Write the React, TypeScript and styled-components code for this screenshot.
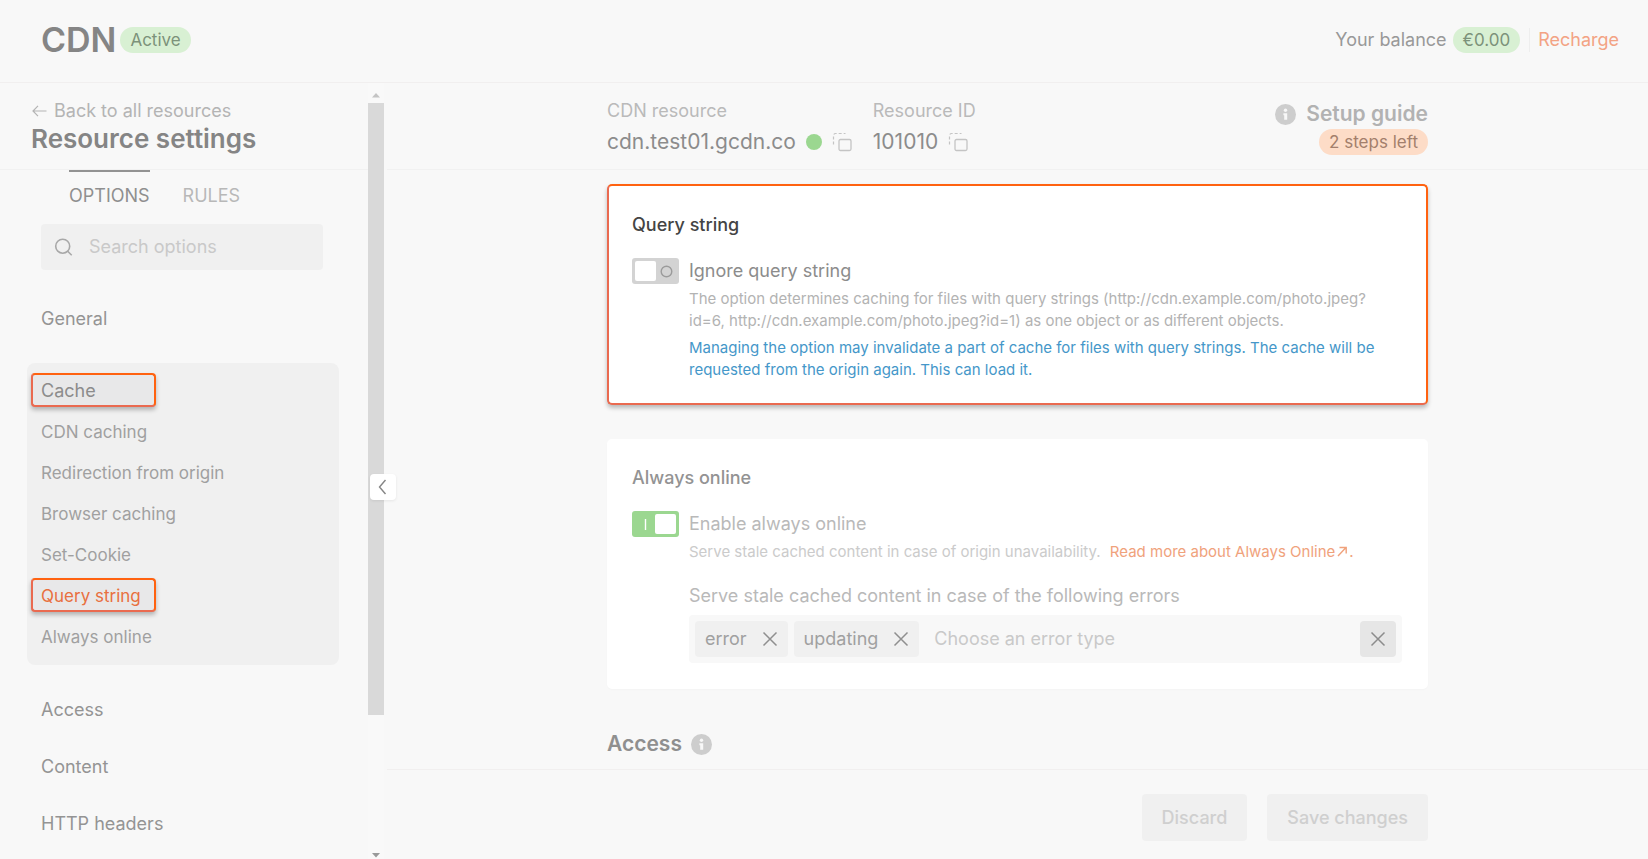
import React from "react";
import styled, { createGlobalStyle } from "styled-components";

const GlobalStyle = createGlobalStyle`
  *, *::before, *::after { box-sizing: border-box; }
  body { margin: 0; background: #f8f8f8; font-family: Inter, "Liberation Sans", sans-serif; }
  h1, h2, h3, p { margin: 0; padding: 0; }
  a { color: inherit; text-decoration: none; }
  button, input { font: inherit; color: inherit; border: 0; padding: 0; margin: 0; background: none; }
  button { cursor: pointer; }
`;

const Page = styled.div`
  display: flex;
  flex-direction: column;
  height: 100vh;
  overflow: hidden;
  color: #8a8a8a;
  font-size: 18px;
  line-height: 24px;
`;

const TopBar = styled.header`
  display: flex;
  align-items: center;
  justify-content: space-between;
  flex: none;
  height: 83px;
  padding: 0 29px 2px 41px;
  border-bottom: 1px solid #f1efef;
`;

const Brand = styled.div`
  display: flex;
  align-items: center;
  gap: 4px;
`;

const BrandName = styled.h1`
  font-size: 34px;
  line-height: 40px;
  font-weight: 600;
  color: #858585;
`;

const Pill = styled.span<{ $tone: "green" | "orange" }>`
  display: inline-block;
  padding: 0 10px;
  border-radius: 13px;
  font-size: 17px;
  line-height: 26px;
  white-space: nowrap;
  background: ${(p) => (p.$tone === "green" ? "#d8f0d3" : "#fddcc7")};
  color: ${(p) => (p.$tone === "green" ? "#7c927a" : "#a37f6c")};
`;

const Balance = styled.div`
  display: flex;
  align-items: center;
  gap: 6px;
  color: #999;
`;

const Recharge = styled.a`
  margin-left: 3px;
  padding-left: 8px;
  border-left: 1px solid #eee;
  color: #f3a384;
`;

const Body = styled.div`
  display: flex;
  flex: 1;
  min-height: 0;
`;

const Sidebar = styled.aside`
  position: relative;
  display: flex;
  flex: none;
  width: 387px;
`;

const SidebarContent = styled.div`
  flex: 1;
  overflow: hidden;
`;

const SidebarHead = styled.div`
  height: 87px;
  padding: 16px 31px 0;
  border-bottom: 1px solid #f1f1f1;
`;

const BackLink = styled.a`
  display: flex;
  align-items: center;
  gap: 7px;
  color: #b4b4b4;
`;

const SidebarTitle = styled.h2`
  font-size: 26px;
  line-height: 32px;
  font-weight: 600;
  color: #858585;
`;

const Tabs = styled.div`
  display: flex;
  gap: 33px;
  padding: 0 69px;
`;

const Tab = styled.button<{ $active?: boolean }>`
  height: 54px;
  padding-bottom: 5px;
  border-top: 2px solid ${(p) => (p.$active ? "#929292" : "transparent")};
  color: ${(p) => (p.$active ? "#8f8f8f" : "#b8b8b8")};
`;

const SearchBox = styled.label`
  display: flex;
  align-items: center;
  gap: 16px;
  height: 46px;
  margin: 0 45px 0 41px;
  padding: 0 13px;
  border-radius: 4px;
  background: #f0f0f0;
  color: #a8a8a8;
`;

const TextInput = styled.input`
  flex: 1;
  min-width: 0;
  outline: none;
  &::placeholder { color: #c9c9c9; opacity: 1; }
`;

const Nav = styled.nav`
  display: flex;
  flex-direction: column;
  padding: 36px 29px 0 27px;
`;

const NavSection = styled.a`
  padding: 0 14px;
  margin-bottom: 32px;
  line-height: 25px;
  color: #949494;
`;

const NavGroup = styled.div`
  display: flex;
  flex-direction: column;
  align-items: flex-start;
  gap: 7px;
  height: 302px;
  margin-bottom: 32px;
  padding: 10px 4px;
  border-radius: 8px;
  background: #f0f0f0;
`;

const NavItem = styled.a<{ $marked?: boolean; $tone?: "heading" | "current" }>`
  width: 125px;
  padding: 4px 8px 2px;
  border: 2px solid transparent;
  border-radius: 4px;
  font-size: ${(p) => (p.$tone === "heading" ? 18 : 17)}px;
  line-height: 24px;
  white-space: nowrap;
  color: ${(p) => (p.$tone === "current" ? "#e8703f" : p.$tone === "heading" ? "#8c8c8c" : "#a0a0a0")};
  ${(p) =>
    p.$marked &&
    `
    border-color: #ff6210 #ff6210 #ea6a50 #ea6a50;
    background: #e8e8e9;
    box-shadow: 0 3px 4px rgba(0, 0, 0, 0.25);
  `}
`;

const ScrollTrack = styled.div`
  display: flex;
  flex-direction: column;
  align-items: center;
  flex: none;
  width: 16px;
  margin-right: 3px;
  padding: 9px 0 1px;
  background: #f9f9f9;
`;

const ScrollThumb = styled.div`
  flex: 611;
  width: 100%;
  margin-top: 5px;
  background: #d9d9d9;
`;

const ScrollRest = styled.div`
  flex: 137;
`;

const CollapseButton = styled.button`
  position: absolute;
  top: 391px;
  right: -9px;
  display: flex;
  align-items: center;
  justify-content: center;
  width: 26px;
  height: 26px;
  border-radius: 4px;
  background: #fff;
  box-shadow: 0 1px 3px rgba(0, 0, 0, 0.08);
  color: #858585;
`;

const Main = styled.main`
  display: flex;
  flex-direction: column;
  flex: 1;
  min-width: 0;
`;

const Column = styled.div`
  width: 100%;
  max-width: 821px;
  margin: 0 auto;
`;

const ResourceBar = styled.div`
  flex: none;
  height: 87px;
  border-bottom: 1px solid #f1f1f1;
`;

const ResourceRow = styled(Column)`
  display: flex;
  padding-top: 16px;
`;

const Resource = styled.div`
  margin-right: 21px;
  color: #bababa;
`;

const ResourceValue = styled.div`
  display: flex;
  align-items: center;
  gap: 10px;
  margin-top: 3px;
  font-size: 21px;
  line-height: 32px;
  color: #8c8c8c;
`;

const StatusDot = styled.span`
  width: 16px;
  height: 16px;
  border-radius: 50%;
  background: #9bd790;
`;

const IconButton = styled.button`
  display: flex;
  align-items: center;
  justify-content: center;
  color: #c4c4c4;
`;

const Guide = styled.div`
  display: flex;
  flex-direction: column;
  align-items: flex-end;
  gap: 1px;
  margin: 1px 0 0 auto;
`;

const GuideLink = styled.a`
  display: flex;
  align-items: center;
  gap: 10px;
  font-size: 21px;
  line-height: 28px;
  font-weight: 600;
  color: #b2b2b2;
`;

const Scroller = styled.div`
  flex: 1;
  min-height: 0;
  overflow: hidden;
  padding-top: 14px;
`;

const Card = styled.section<{ $marked?: boolean }>`
  margin-bottom: 34px;
  padding: ${(p) => (p.$marked ? 24 : 22)}px 24px 22px 23px;
  border: 2px solid;
  border-color: ${(p) => (p.$marked ? "#ff6210 #ff6210 #ea6a50 #ea6a50" : "#fff")};
  border-radius: 5px;
  background: #fff;
  box-shadow: ${(p) => (p.$marked ? "0 3px 4px rgba(0, 0, 0, 0.25)" : "0 1px 2px rgba(0, 0, 0, 0.02)")};
`;

const CardTitle = styled.h3<{ $strong?: boolean }>`
  margin: 3px 0 21px;
  font-size: 18px;
  line-height: 24px;
  font-weight: 500;
  color: ${(p) => (p.$strong ? "#444" : "#939393")};
`;

const Option = styled.div`
  display: grid;
  grid-template-columns: 47px 1fr;
  column-gap: 10px;
`;

const Switch = styled.span<{ $on?: boolean }>`
  display: flex;
  flex-direction: ${(p) => (p.$on ? "row-reverse" : "row")};
  position: relative;
  width: 47px;
  height: 26px;
  padding: 3px;
  border-radius: 3px;
  background: ${(p) => (p.$on ? "#9bd790" : "#d3d3d3")};
`;

const SwitchInput = styled.input`
  position: absolute;
  inset: 0;
  width: 100%;
  height: 100%;
  opacity: 0;
  appearance: none;
`;

const SwitchKnob = styled.span`
  width: 21px;
  border-radius: 2px;
  background: #fff;
`;

const SwitchMark = styled.span`
  display: flex;
  flex: 1;
  align-items: center;
  justify-content: center;
`;

const OptionLabel = styled.label<{ $faded?: boolean }>`
  line-height: 26px;
  color: ${(p) => (p.$faded ? "#b9b9b9" : "#8c8c8c")};
`;

const OptionBody = styled.div`
  grid-column: 2;
`;

const Hint = styled.p<{ $tone?: "info" | "faded" }>`
  margin-top: ${(p) => (p.$tone === "info" ? 5 : 4)}px;
  padding-right: 12px;
  font-size: 15px;
  line-height: 22px;
  color: ${(p) => (p.$tone === "info" ? "#4597c9" : p.$tone === "faded" ? "#cbcbcb" : "#b3b3b3")};
`;

const HintLink = styled.a`
  margin-left: 5px;
  color: #f0a27c;
  svg { vertical-align: -2px; }
`;

const FieldLabel = styled.label`
  display: block;
  margin: 21px 0 7px;
  color: #b9b9b9;
`;

const TagField = styled.div`
  display: flex;
  align-items: center;
  gap: 6px;
  height: 48px;
  margin-bottom: 2px;
  padding: 0 6px;
  border-radius: 4px;
  background: #f8f8f8;
`;

const Tag = styled.span`
  display: flex;
  align-items: center;
  gap: 15px;
  height: 36px;
  padding: 0 10px;
  border-radius: 4px;
  background: #f0f0f0;
  color: #a0a0a0;
`;

const TagInput = styled(TextInput)`
  padding-left: 9px;
`;

const ClearButton = styled(IconButton)`
  width: 36px;
  height: 36px;
  border-radius: 4px;
  background: #e6e6e6;
  color: #8c8c8c;
`;

const TagRemove = styled(IconButton)`
  color: #8f8f8f;
`;

const SectionTitle = styled.h2`
  display: flex;
  align-items: center;
  gap: 9px;
  padding-top: 7px;
  font-size: 21px;
  line-height: 28px;
  font-weight: 600;
  color: #8f8f8f;
`;

const Footer = styled.footer`
  flex: none;
  height: 90px;
  padding-top: 24px;
  border-top: 1px solid #f1efef;
`;

const Actions = styled(Column)`
  display: flex;
  justify-content: flex-end;
  gap: 20px;
`;

const ActionButton = styled.button`
  height: 47px;
  padding: 0 20px;
  border-radius: 4px;
  background: #f0f0f0;
  font-weight: 500;
  color: #cfcfcf;
`;

const InfoIcon = () => (
  <svg width="21" height="21" viewBox="0 0 21 21" aria-hidden="true">
    <circle cx="10.500" cy="10.500" r="10.500" fill="#cdcdcd" />
    <circle cx="10.500" cy="6.300" r="1.700" fill="#f8f8f8" />
    <path d="M8.400 9.200h3.800v6.600H9.200v-4.500h-.8z" fill="#f8f8f8" />
  </svg>
);

const CopyIcon = () => (
  <svg width="20" height="20" viewBox="0 0 20 20" fill="none" stroke="currentColor" aria-hidden="true">
    <rect x="7" y="7.500" width="12" height="11" rx="1.500" strokeWidth="1.300" />
    <path d="M1.500 12.500V3.500a2 2 0 0 1 2-2H13.500" strokeWidth="1.200" strokeDasharray="3 2" />
  </svg>
);

const CloseIcon = () => (
  <svg width="16" height="16" viewBox="0 0 16 16" fill="none" stroke="currentColor" strokeWidth="1.500" aria-hidden="true">
    <path d="M1.500 1.500l13 13M14.500 1.500l-13 13" />
  </svg>
);

const BackIcon = () => (
  <svg width="16" height="12" viewBox="0 0 16 12" fill="none" stroke="currentColor" strokeWidth="1.200" aria-hidden="true">
    <path d="M15.500 6H2M7 .8L2 6l5 5.200" />
  </svg>
);

const SearchIcon = () => (
  <svg width="19" height="19" viewBox="0 0 19 19" fill="none" stroke="currentColor" strokeWidth="1.600" aria-hidden="true">
    <circle cx="8.700" cy="8.200" r="7" />
    <path d="M13.700 13.200l4 4" />
  </svg>
);

const ChevronIcon = () => (
  <svg width="10" height="16" viewBox="0 0 10 16" fill="none" stroke="currentColor" strokeWidth="1.400" aria-hidden="true">
    <path d="M7.500 1L1.500 8l6 7" />
  </svg>
);

const OutIcon = () => (
  <svg width="14" height="14" viewBox="0 0 14 14" fill="none" stroke="currentColor" strokeWidth="1.400" aria-hidden="true">
    <path d="M3 11L11 2.600M4.500 2.500h6.700v6" />
  </svg>
);

const ScrollArrow = ({ down }: { down?: boolean }) => (
  <svg width="8" height="6" viewBox="0 0 8 6" aria-hidden="true">
    <path d={down ? "M0 1h8L4 5.500z" : "M0 5.500h8L4 1z"} fill={down ? "#999" : "#c4c4c4"} />
  </svg>
);

const cacheItems = ["CDN caching", "Redirection from origin", "Browser caching", "Set-Cookie", "Query string", "Always online"];

export default function App() {
  return (
    <Page>
      <GlobalStyle />
      <TopBar>
        <Brand>
          <BrandName>CDN</BrandName>
          <Pill $tone="green">Active</Pill>
        </Brand>
        <Balance>
          Your balance
          <Pill $tone="green">€0.00</Pill>
          <Recharge href="#recharge">Recharge</Recharge>
        </Balance>
      </TopBar>
      <Body>
        <Sidebar>
          <SidebarContent>
            <SidebarHead>
              <BackLink href="#resources"><BackIcon />Back to all resources</BackLink>
              <SidebarTitle>Resource settings</SidebarTitle>
            </SidebarHead>
            <Tabs>
              <Tab $active>OPTIONS</Tab>
              <Tab>RULES</Tab>
            </Tabs>
            <SearchBox>
              <SearchIcon />
              <TextInput type="text" placeholder="Search options" aria-label="Search options" />
            </SearchBox>
            <Nav>
              <NavSection href="#general">General</NavSection>
              <NavGroup>
                <NavItem href="#cache" $marked $tone="heading">Cache</NavItem>
                {cacheItems.map((item) => {
                  const current = item === "Query string";
                  return (
                    <NavItem key={item} href="#cache" $marked={current} $tone={current ? "current" : undefined}>
                      {item}
                    </NavItem>
                  );
                })}
              </NavGroup>
              <NavSection href="#access">Access</NavSection>
              <NavSection href="#content">Content</NavSection>
              <NavSection href="#headers">HTTP headers</NavSection>
            </Nav>
          </SidebarContent>
          <ScrollTrack aria-hidden="true">
            <ScrollArrow />
            <ScrollThumb />
            <ScrollRest />
            <ScrollArrow down />
          </ScrollTrack>
          <CollapseButton aria-label="Collapse sidebar"><ChevronIcon /></CollapseButton>
        </Sidebar>
        <Main>
          <ResourceBar>
            <ResourceRow>
              <Resource>
                CDN resource
                <ResourceValue>
                  cdn.test01.gcdn.co
                  <StatusDot />
                  <IconButton aria-label="Copy CDN resource"><CopyIcon /></IconButton>
                </ResourceValue>
              </Resource>
              <Resource>
                Resource ID
                <ResourceValue>
                  101010
                  <IconButton aria-label="Copy resource ID"><CopyIcon /></IconButton>
                </ResourceValue>
              </Resource>
              <Guide>
                <GuideLink href="#guide"><InfoIcon />Setup guide</GuideLink>
                <Pill $tone="orange">2 steps left</Pill>
              </Guide>
            </ResourceRow>
          </ResourceBar>
          <Scroller>
            <Column>
              <Card $marked>
                <CardTitle $strong>Query string</CardTitle>
                <Option>
                  <Switch>
                    <SwitchInput id="ignore-query" type="checkbox" />
                    <SwitchKnob />
                    <SwitchMark>
                      <svg width="13" height="13" viewBox="0 0 13 13" aria-hidden="true">
                        <circle cx="6.500" cy="6.500" r="5.300" fill="none" stroke="#9b9b9b" strokeWidth="1.400" />
                      </svg>
                    </SwitchMark>
                  </Switch>
                  <OptionLabel htmlFor="ignore-query">Ignore query string</OptionLabel>
                  <OptionBody>
                    <Hint>
                      The option determines caching for files with query strings (http://cdn.example.com/photo.jpeg?<wbr />
                      id=6, http://cdn.example.com/photo.jpeg?id=1) as one object or as different objects.
                    </Hint>
                    <Hint $tone="info">
                      Managing the option may invalidate a part of cache for files with query strings. The cache will be
                      requested from the origin again. This can load it.
                    </Hint>
                  </OptionBody>
                </Option>
              </Card>
              <Card>
                <CardTitle>Always online</CardTitle>
                <Option>
                  <Switch $on>
                    <SwitchInput id="always-online" type="checkbox" defaultChecked />
                    <SwitchKnob />
                    <SwitchMark>
                      <svg width="3" height="11" viewBox="0 0 3 11" aria-hidden="true">
                        <path d="M1.500 0v11" stroke="#fff" strokeWidth="1.400" />
                      </svg>
                    </SwitchMark>
                  </Switch>
                  <OptionLabel htmlFor="always-online" $faded>Enable always online</OptionLabel>
                  <OptionBody>
                    <Hint $tone="faded">
                      Serve stale cached content in case of origin unavailability.{" "}
                      <HintLink href="#always-online-docs">Read more about Always Online<OutIcon />.</HintLink>
                    </Hint>
                    <FieldLabel htmlFor="error-type">Serve stale cached content in case of the following errors</FieldLabel>
                    <TagField>
                      <Tag>error<TagRemove aria-label="Remove error"><CloseIcon /></TagRemove></Tag>
                      <Tag>updating<TagRemove aria-label="Remove updating"><CloseIcon /></TagRemove></Tag>
                      <TagInput id="error-type" type="text" placeholder="Choose an error type" />
                      <ClearButton aria-label="Clear all"><CloseIcon /></ClearButton>
                    </TagField>
                  </OptionBody>
                </Option>
              </Card>
              <SectionTitle>Access <InfoIcon /></SectionTitle>
            </Column>
          </Scroller>
          <Footer>
            <Actions>
              <ActionButton>Discard</ActionButton>
              <ActionButton>Save changes</ActionButton>
            </Actions>
          </Footer>
        </Main>
      </Body>
    </Page>
  );
}
